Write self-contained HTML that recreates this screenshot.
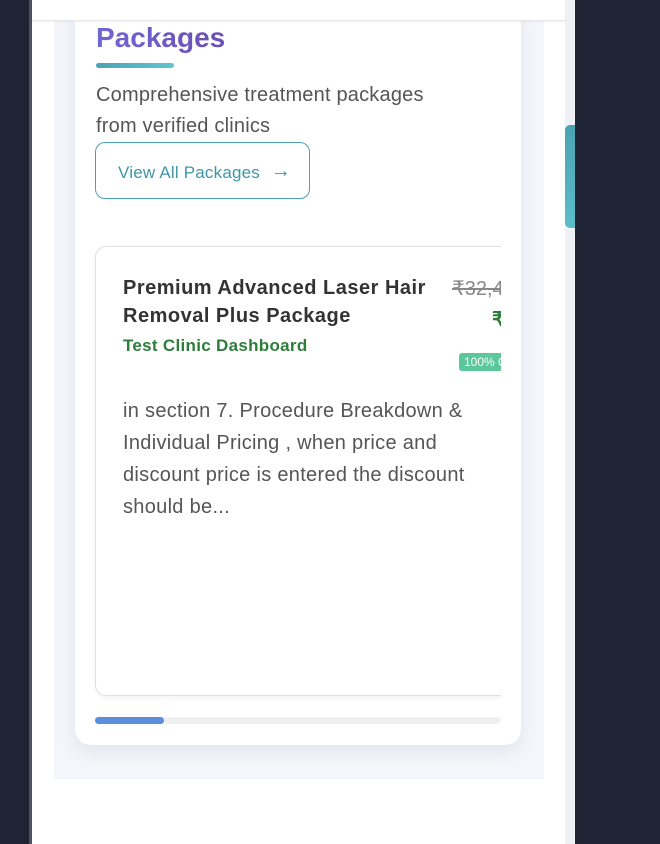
<!DOCTYPE html>
<html><head><meta charset="utf-8"><style>
*{margin:0;padding:0;box-sizing:border-box}
body{width:660px;height:844px;background:#1e2433;position:relative;overflow:hidden;font-family:"Liberation Sans",sans-serif}
.edge{position:absolute;left:29px;top:0;width:3px;height:844px;background:#4a5366}
.white{position:absolute;left:32px;top:0;width:533px;height:844px;background:#fff}
.track{position:absolute;left:565px;top:0;width:10px;height:844px;background:#f0f1f5}
.thumb{position:absolute;left:565px;top:125px;width:10px;height:103px;background:linear-gradient(#4aa3b2,#5bbcc9);border-radius:5px 0 0 5px}
.sec{position:absolute;left:54px;top:21px;width:490px;height:758px;background:#f5f6fb}
.hdr{position:absolute;left:32px;top:0;width:533px;height:21px;background:#fff;border-bottom:1px solid #e6e6ea;box-shadow:0 1px 3px rgba(0,0,0,.05)}
.card{position:absolute;left:75px;top:10px;width:446px;height:735px;background:#fff;border-radius:0 0 16px 16px;box-shadow:0 6px 18px rgba(60,70,120,.10)}
h1{position:absolute;left:96px;top:22px;font-size:28px;font-weight:bold;background:linear-gradient(90deg,#7166d6,#6a4fb0);-webkit-background-clip:text;color:transparent;letter-spacing:0px}
.ul{position:absolute;left:96px;top:63px;width:78px;height:5px;border-radius:3px;background:linear-gradient(90deg,#4aa3b2,#62c4d0)}
.desc{position:absolute;left:96px;top:80px;font-size:20px;line-height:31px;color:#555;width:365px;letter-spacing:0.2px}
.btn{position:absolute;left:95px;top:142px;width:215px;height:57px;border:1.5px solid #4aa3b2;border-radius:10px;color:#3d97a6;font-size:17px;padding:18px 0 0 22px;letter-spacing:0.2px}
.btn b{font-size:20px;font-weight:normal;position:relative;top:-1px;margin-left:6px}
.pk{position:absolute;left:95px;top:246px;width:420px;height:450px;border:1px solid #dedfe4;border-radius:11px;background:#fff;box-shadow:0 2px 6px rgba(0,0,0,.05)}
.t{position:absolute;left:123px;top:274px;font-size:20px;font-weight:bold;line-height:28px;color:#333;letter-spacing:0.5px}
.cl{position:absolute;left:123px;top:336px;font-size:17px;font-weight:bold;color:#2e7d3a;letter-spacing:0.3px}
.pc{position:absolute;left:440px;top:270px;width:61px;height:110px;overflow:hidden}
.op{position:absolute;left:12px;top:6px;font-size:20px;color:#888;text-decoration:line-through;white-space:nowrap}
.np{position:absolute;left:52px;top:37px;font-size:20px;font-weight:bold;color:#2e7d3a}
.bd{position:absolute;left:19px;top:83px;height:18px;width:60px;background:#5cc79a;color:#fff;font-size:12px;padding:2px 0 0 5px;border-radius:3px}
.body{position:absolute;left:123px;top:395px;width:378px;font-size:20px;line-height:32px;color:#555;letter-spacing:0.3px}
.cov{position:absolute;left:501px;top:240px;width:20px;height:470px;background:#fff}
.pb{position:absolute;left:95px;top:717px;width:406px;height:7px;background:#f0f0f0;border-radius:4px}
.pb i{position:absolute;left:0;top:0;width:69px;height:7px;background:#5b8fdb;border-radius:4px}
</style></head><body>
<div class="edge"></div><div class="white"></div><div class="track"></div><div class="thumb"></div>
<div class="sec"></div><div class="card"></div><div class="hdr"></div>
<h1>Packages</h1><div class="ul"></div>
<div class="desc">Comprehensive treatment packages from verified clinics</div>
<div class="btn">View All Packages <b>→</b></div>
<div class="pk"></div>
<div class="t">Premium Advanced Laser Hair<br>Removal Plus Package</div>
<div class="cl">Test Clinic Dashboard</div>
<div class="pc"><div class="op">₹32,450</div><div class="np">₹</div><div class="bd">100% Off</div></div>
<div class="body">in section 7. Procedure Breakdown &amp; Individual Pricing , when price and discount price is entered the discount should be...</div>
<div class="cov"></div>
<div class="pb"><i></i></div>
</body></html>
